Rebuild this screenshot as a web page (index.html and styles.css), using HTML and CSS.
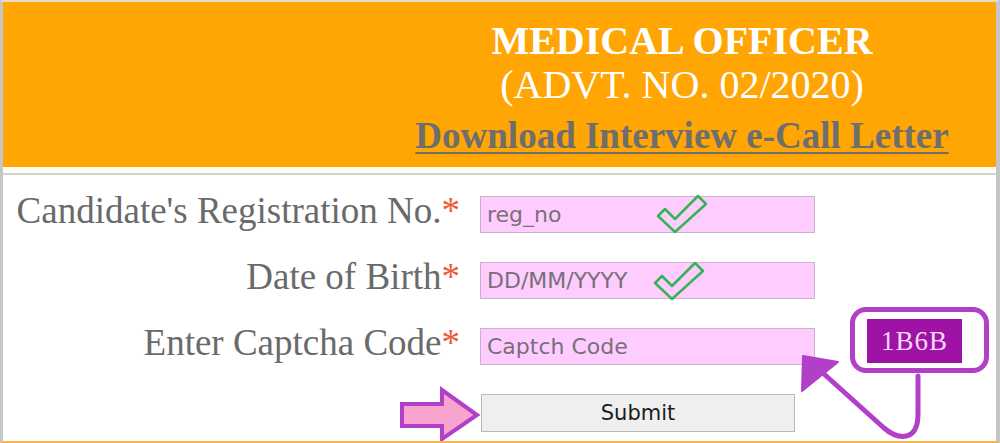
FILE: index.html
```html
<!DOCTYPE html>
<html lang="en">
<head>
<meta charset="utf-8">
<title>Medical Officer - Download Interview e-Call Letter</title>
<link rel="stylesheet" href="styles.css">
</head>
<body>
<div class="page">
  <header class="banner">
    <h1 class="title">MEDICAL OFFICER</h1>
    <p class="advt">(ADVT. NO. 02/2020)</p>
    <a class="download" href="#">Download Interview e-Call Letter</a>
  </header>
  <div class="divider"></div>
  <form class="form">
    <label class="label" for="reg">Candidate's Registration No.<span class="req">*</span></label>
    <div class="field">
      <input class="input" id="reg" type="text" placeholder="reg_no">
      <svg class="check check-1" viewBox="0 0 52 40" width="52" height="40"><polygon points="2,22 9,15 19,25 42,2 50,10 19,38" /></svg>
    </div>

    <label class="label" for="dob">Date of Birth<span class="req">*</span></label>
    <div class="field">
      <input class="input" id="dob" type="text" placeholder="DD/MM/YYYY">
      <svg class="check check-2" viewBox="0 0 52 40" width="52" height="40"><polygon points="2,22 9,15 19,25 42,2 50,10 19,38" /></svg>
    </div>

    <label class="label" for="cap">Enter Captcha Code<span class="req">*</span></label>
    <div class="field">
      <input class="input" id="cap" type="text" placeholder="Captch Code">
    </div>
    <div class="captcha-ring"><span class="captcha">1B6B</span></div>

    <div class="field">
      <button class="submit" type="button">Submit</button>
    </div>
  </form>

  <svg class="annotations" viewBox="0 0 1000 443" width="1000" height="443">
    <path class="curve" d="M918 376 V414 C918 442 898 440 884 428 L824 374" />
    <polygon class="head" points="803,356 802,391 838,362" />
    <polygon class="block-arrow" points="402,404 442,404 442,390 477,415 442,439 442,426 402,426" />
  </svg>
</div>
</body>
</html>
```

FILE: styles.css
```css
* { box-sizing: border-box; }

html, body {
  margin: 0;
  padding: 0;
  background: #ffffff;
}

.page {
  position: relative;
  width: 1000px;
  height: 443px;
  overflow: hidden;
  border-left: 3px solid #c6c6c6;
  border-right: 4px solid #c6c6c6;
  border-top: 2px solid #e6dcc8;
  border-bottom: 2px solid #f7b64c;
  background: #ffffff;
}

.banner {
  height: 165px;
  background: #ffa504;
  padding: 17px 0 0 365px;
  text-align: center;
  font-family: "Liberation Serif", "Times New Roman", serif;
  color: #ffffff;
}

.title {
  margin: 0;
  font-size: 40px;
  line-height: 44px;
  font-weight: bold;
}

.advt {
  margin: 0;
  font-size: 40px;
  line-height: 44px;
  font-weight: normal;
}

.download {
  display: inline-block;
  margin-top: 7px;
  font-size: 37px;
  line-height: 44px;
  font-weight: bold;
  color: #6e6e6e;
  text-decoration: underline;
  text-decoration-thickness: 2px;
  text-underline-offset: 4px;
}

.divider {
  height: 8px;
  background: #fffdf4;
  border-bottom: 2px solid #d2d2d2;
}

.form {
  display: grid;
  grid-template-columns: 457px 335px 1fr;
  grid-auto-rows: 37px;
  column-gap: 20px;
  row-gap: 29px;
  padding-top: 21px;
  margin: 0;
}

.label {
  grid-column: 1;
  text-align: right;
  font-family: "Liberation Serif", "Times New Roman", serif;
  font-size: 37px;
  line-height: 37px;
  color: #6a6a6a;
  margin-top: -4px;
  white-space: nowrap;
}

.req {
  color: #f05a3c;
}

.field {
  grid-column: 2;
  position: relative;
}

.input {
  display: block;
  width: 335px;
  height: 37px;
  margin: 0;
  padding: 0 6px;
  background: #ffccff;
  border: 1px solid #c8b6c8;
  font-family: "DejaVu Sans", Verdana, sans-serif;
  font-size: 22px;
  color: #707070;
  outline: none;
}

.input::placeholder {
  color: #787078;
  opacity: 1;
}

.check {
  position: absolute;
  fill: none;
  stroke: #35b552;
  stroke-width: 2.5;
  stroke-linejoin: round;
}

.check-1 { left: 176px; top: -2px; }
.check-2 { left: 173px; top: -1px; }

.captcha-ring {
  grid-column: 3;
  justify-self: start;
  align-self: start;
  margin: -21px 0 0 15px;
  padding: 7px 22px 5px 12px;
  border: 5px solid #b23fc7;
  border-radius: 16px;
  background: #ffffff;
}

.captcha {
  display: block;
  width: 95px;
  height: 44px;
  background: #9e12a6;
  color: #f6d8f6;
  font-family: "Liberation Serif", "Times New Roman", serif;
  font-size: 27px;
  line-height: 44px;
  text-align: center;
  letter-spacing: 1px;
}

.submit {
  display: block;
  width: 314px;
  height: 38px;
  margin: 0 0 0 1px;
  background: #efefef;
  border: 1px solid #b8b8b8;
  font-family: "DejaVu Sans", Verdana, sans-serif;
  font-size: 21px;
  color: #1c1c1c;
  padding: 0;
}

.annotations {
  position: absolute;
  left: -3px;
  top: -2px;
  pointer-events: none;
}

.curve {
  fill: none;
  stroke: #b23fc7;
  stroke-width: 5;
  stroke-linecap: round;
  stroke-linejoin: round;
}

.head {
  fill: #b23fc7;
  stroke: #b23fc7;
  stroke-width: 2;
  stroke-linejoin: round;
}

.block-arrow {
  fill: #f8a4cf;
  stroke: #b23fc7;
  stroke-width: 4;
  stroke-linejoin: miter;
}
```
